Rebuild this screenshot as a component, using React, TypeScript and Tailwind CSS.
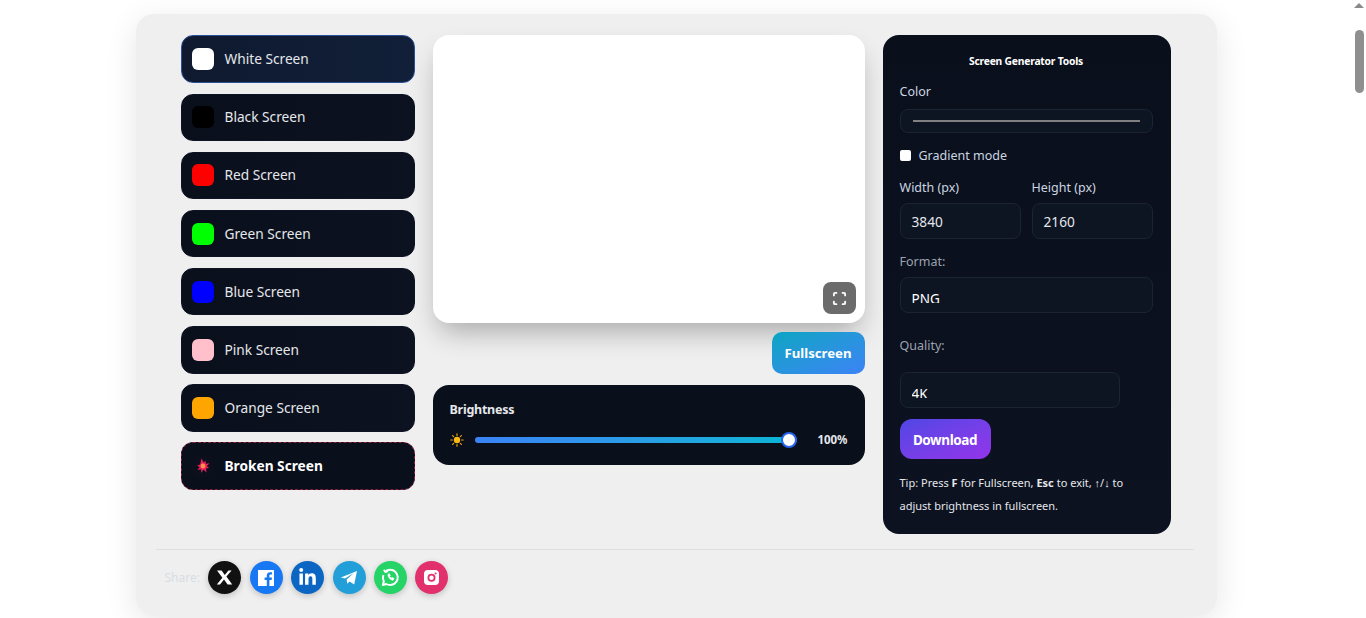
import React from "react";
import { FaLinkedinIn } from "react-icons/fa6";
import { Scan } from "lucide-react";

const screens = [
  { name: "White Screen", color: "bg-[#ffffff]" },
  { name: "Black Screen", color: "bg-[#000000]" },
  { name: "Red Screen", color: "bg-[#ff0000]" },
  { name: "Green Screen", color: "bg-[#00ff00]" },
  { name: "Blue Screen", color: "bg-[#0000ff]" },
  { name: "Pink Screen", color: "bg-[#ffc0cb]" },
  { name: "Orange Screen", color: "bg-[#ffa500]" },
];

function Burst() {
  return (
    <svg width="22" height="22" viewBox="0 0 22 22">
      <polygon
        points="9.5,3.5 11.8,7.6 13.5,5.5 13.8,8.8 17.5,8.2 14.8,11 17,13 14,13.4 14.5,17.5 11.4,14.6 9.5,18 9,14.2 5.6,15 7.6,12 5,10.4 8.2,9.6"
        fill="#ea1f5f"
      />
      <circle cx="11" cy="11" r="2.4" fill="#ff8f45" />
    </svg>
  );
}

function Sun() {
  return (
    <svg width="14" height="14" viewBox="0 0 14 14">
      <circle cx="7" cy="7" r="3.2" fill="#fbb817" />
      <g stroke="#e8a012" strokeWidth="1.2" strokeLinecap="round">
        <path d="M7 .8v1.6M7 11.6v1.6M.8 7h1.6M11.6 7h1.6M2.6 2.6l1.1 1.1M10.3 10.3l1.1 1.1M2.6 11.4l1.1-1.1M10.3 3.7l1.1-1.1" />
      </g>
    </svg>
  );
}

function XLogo() {
  return (
    <svg width="17" height="17" viewBox="0 0 17 17">
      <path d="M1 1.5h4.6l3.2 4.4 3.6-4.4h3.2L10.4 7.6l5.8 7.9h-4.6L8 10.6l-4 4.9H.8l5.6-6.8z" fill="#fff" />
    </svg>
  );
}

function Facebook() {
  return (
    <svg width="18" height="18" viewBox="0 0 18 18">
      <path
        d="M1 1h16v16h-4.6v-6h2.2l.4-2.6h-2.6V6.9c0-.8.3-1.3 1.3-1.3H15V3.3c-.4 0-1.1-.1-1.9-.1-2 0-3.3 1.2-3.3 3.4v1.8H7.6V11h2.2v6H1z"
        fill="#fff"
      />
    </svg>
  );
}

function Plane() {
  return (
    <svg width="18" height="18" viewBox="0 0 18 18">
      <path d="M.8 8.6 17 2l-2.8 13.6-4.6-3.2-2.4 2.4-.5-4.4 7-6.4-8.6 5.6z" fill="#fff" />
    </svg>
  );
}

function Whats() {
  return (
    <svg width="21" height="21" viewBox="0 0 21 21" fill="none" stroke="#fff" strokeWidth="2">
      <path d="M5.2 4.6A7.6 7.6 0 1 1 6.4 17l-3.6 1 1-3.5A7.6 7.6 0 0 1 3.4 8" strokeLinejoin="round" />
      <path d="M3.8 2.8l1.6 2.4 2.6-1" strokeWidth="1.6" />
      <path d="M8 7.5c0 3 2 5.2 5 5.8l1-1.8-2-1-.8.7-1.6-1.8.6-.8-1-2z" fill="#fff" strokeWidth="0.8" />
    </svg>
  );
}

function Insta() {
  return (
    <svg width="17" height="17" viewBox="0 0 17 17">
      <rect x="1" y="1" width="15" height="15" rx="4" fill="#fff" />
      <circle cx="8.5" cy="8.8" r="3.1" fill="none" stroke="#e1306c" strokeWidth="1.8" />
      <circle cx="12.6" cy="4.4" r="1" fill="#e1306c" />
    </svg>
  );
}

const socials = [
  { bg: "bg-[#111111]", icon: <XLogo /> },
  { bg: "bg-[#1877f2]", icon: <Facebook /> },
  { bg: "bg-[#0a66c2]", icon: <FaLinkedinIn size={19} color="#fff" /> },
  { bg: "bg-[#229ed9]", icon: <Plane /> },
  { bg: "bg-[#25d366]", icon: <Whats /> },
  { bg: "bg-[#e1306c]", icon: <Insta /> },
];

export default function App() {
  return (
    <div className="flex h-[618px] w-full overflow-hidden bg-white font-['Noto_Sans',sans-serif]">
      <main className="min-w-0 flex-1">
        <div className="mx-auto mt-[14px] h-[601px] w-[1081px] rounded-[18px] bg-[#efefef] px-5 pt-[21px] shadow-[0_8px_32px_rgba(0,0,0,0.1)]">
          <div className="ml-[25px] flex h-[514px] w-[990px] items-start gap-[18px]">
            <div className="flex w-[234px] flex-col gap-[10.54px] pt-[0.4px]">
              {screens.map((s, i) => (
                <div
                  key={s.name}
                  className={
                    i === 0
                      ? "flex h-[47.6px] items-center gap-[11px] rounded-xl border border-[#2b4f9a] bg-gradient-to-r from-[#0f1a30] to-[#111f38] px-[10px] text-[13.7px] text-[#e5e7eb]"
                      : "flex h-[47.6px] items-center gap-[11px] rounded-xl border border-[#0e1423] bg-gradient-to-r from-[#0a0f1c] to-[#0c1220] px-[10px] text-[13.7px] text-[#e5e7eb]"
                  }
                >
                  <span className={`h-[22px] w-[22px] rounded-md ${s.color}`} />
                  <span className="pt-[0.6px]">{s.name}</span>
                </div>
              ))}
              <div className="flex h-[47.6px] items-center gap-[11px] rounded-xl border border-dashed border-[#8a1f3f] bg-[#0a0f1c] px-[10px] text-[13.7px] font-bold text-white">
                <span className="flex h-[22px] w-[22px] items-center justify-center rounded-md bg-[#0c0f1c]">
                  <Burst />
                </span>
                <span>Broken Screen</span>
              </div>
            </div>

            <div className="flex w-[432px] flex-col">
              <div className="flex h-[288px] items-end justify-end rounded-2xl bg-white p-[9px] shadow-[0_14px_28px_-6px_rgba(0,0,0,0.3)]">
                <button className="flex h-[32px] w-[33px] items-center justify-center rounded-lg bg-[#6b6b6b] text-white">
                  <Scan size={15} strokeWidth={3} />
                </button>
              </div>
              <div className="mt-[9px] flex justify-end">
                <button className="h-[42px] w-[93px] rounded-[10px] bg-gradient-to-br from-[#06a5c2] to-[#3b82f6] pt-[2px] text-[13.2px] font-bold text-white">
                  Fullscreen
                </button>
              </div>
              <div className="mt-[11px] h-[80px] rounded-2xl bg-[#0a0f1c] px-[17px] pt-[16px]">
                <div className="text-[12.5px] leading-[18px] font-bold tracking-[-0.02em] text-[#e5e7eb]">Brightness</div>
                <div className="mt-[12px] flex items-center">
                  <Sun />
                  <div className="ml-[11px] flex h-[6px] w-[322px] items-center rounded-full bg-gradient-to-r from-[#3b82f6] to-[#06b6d4]">
                    <span className="ml-auto h-4 w-4 rounded-full border-[2px] border-[#2563eb] bg-white" />
                  </div>
                  <span className="ml-auto text-[11.5px] font-bold text-[#e5e7eb]">100%</span>
                </div>
              </div>
            </div>

            <div className="h-[499px] w-[288px] rounded-2xl bg-gradient-to-b from-[#0a0f1c] to-[#0c1220] pt-[18px] pr-[18px] pl-[17px] text-[12.5px] text-[#cbd5e1]">
              <div className="text-center text-[10.3px] leading-4 font-bold tracking-[-0.02em] text-white">Screen Generator Tools</div>
              <div className="mt-[14px] leading-[18px]">Color</div>
              <div className="mt-[8px] flex h-6 items-center rounded-lg border border-[#1b2435] bg-[#0d1422] px-3">
                <div className="h-[2px] w-full bg-[#808080]" />
              </div>
              <div className="mt-[13px] flex items-center gap-2 leading-[18px]">
                <span className="h-[11px] w-[11px] rounded-[2px] bg-white" />
                <span className="pt-px">Gradient mode</span>
              </div>
              <div className="mt-[14px] flex gap-[11px]">
                {[
                  ["Width (px)", "3840"],
                  ["Height (px)", "2160"],
                ].map(([label, value]) => (
                  <div key={label} className="w-[121px]">
                    <div className="leading-[18px]">{label}</div>
                    <div className="mt-[6px] flex h-9 items-center rounded-lg border border-[#1b2435] bg-[#0d1422] px-[11px] pt-[2px] text-[13.7px] text-[#e5e7eb]">
                      {value}
                    </div>
                  </div>
                ))}
              </div>
              <div className="mt-[14px] leading-[18px] text-[#9ca3af]">Format:</div>
              <div className="mt-[6px] h-9 rounded-lg border border-[#1b2435] bg-[#0d1422] px-[11px] pt-[11px]">
                <div className="h-[14px] overflow-hidden text-[13.5px] leading-[20px] text-white">PNG</div>
              </div>
              <div className="mt-[24px] leading-[18px] text-[#9ca3af]">Quality:</div>
              <div className="mt-[17px] h-9 w-[220px] rounded-lg border border-[#1b2435] bg-[#0d1422] px-[11px] pt-[11px]">
                <div className="h-[14px] overflow-hidden text-[13.5px] leading-[20px] text-white">4K</div>
              </div>
              <button className="mt-[11px] h-10 w-[91px] rounded-xl bg-gradient-to-br from-[#4f46e5] to-[#9333ea] pt-[2px] text-[13.5px] font-bold tracking-[-0.03em] text-white">
                Download
              </button>
              <p className="mt-3 text-[11px] leading-[23px] text-[#e5e7eb]">
                Tip: Press <b className="font-bold">F</b> for Fullscreen, <b className="font-bold">Esc</b> to exit, ↑/↓ to
                <br />
                adjust brightness in fullscreen.
              </p>
            </div>
          </div>

          <div className="mr-[3px] flex items-center gap-[8.4px] border-t border-[#dfdfdf] pt-[11px] pl-[9px]">
            <span className="text-[12px] text-[#d8dde3]">Share:</span>
            {socials.map((s, i) => (
              <span
                key={i}
                className={`flex h-[33px] w-[33px] items-center justify-center rounded-full shadow-[0_2px_6px_rgba(0,0,0,0.2)] ${s.bg}`}
              >
                {s.icon}
              </span>
            ))}
          </div>
        </div>
      </main>
      <aside className="flex w-[14px] flex-col items-center bg-white">
        <span className="mt-[3px] h-0 w-0 border-x-[5px] border-b-[5px] border-x-transparent border-b-[#8a8a8a]" />
        <span className="mt-[22px] h-[63px] w-[9px] rounded-full bg-[#8f8f8f]" />
      </aside>
    </div>
  );
}
